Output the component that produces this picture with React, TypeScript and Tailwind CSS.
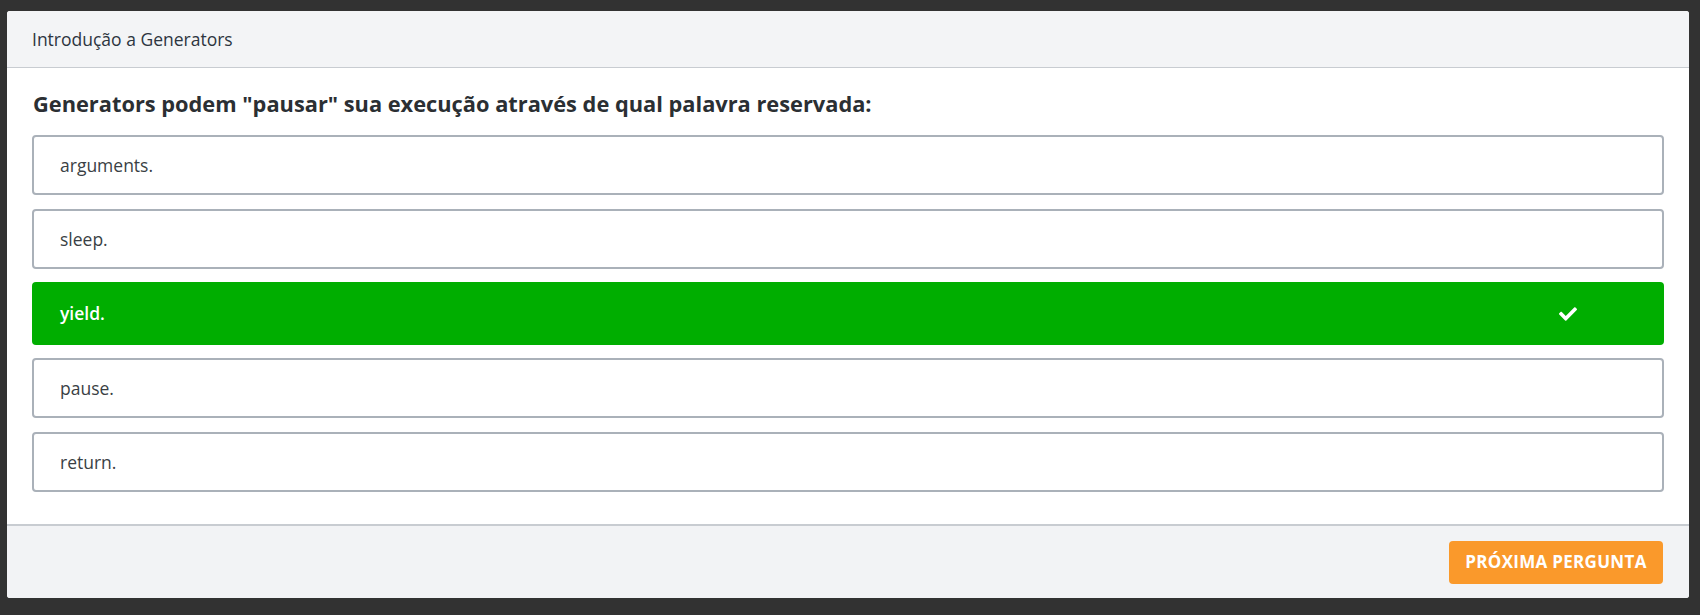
import React from 'react';

const options = [
  { label: 'arguments.', correct: false },
  { label: 'sleep.', correct: false },
  { label: 'yield.', correct: true },
  { label: 'pause.', correct: false },
  { label: 'return.', correct: false },
];

function CheckIcon() {
  return (
    <svg viewBox="0 0 512 512" className="w-[18px] h-[18px]" fill="currentColor">
      <path d="M173.898 439.404l-166.4-166.4c-9.997-9.997-9.997-26.206 0-36.204l36.203-36.204c9.997-9.998 26.207-9.998 36.204 0L192 312.69 432.095 72.596c9.997-9.997 26.207-9.997 36.204 0l36.203 36.204c9.997 9.997 9.997 26.206 0 36.204l-294.4 294.401c-9.998 9.997-26.207 9.997-36.204-.001z" />
    </svg>
  );
}

export default function App() {
  return (
    <div
      className="w-[1700px] h-[615px] bg-[#323232] pt-[11px] pl-[7px]"
      style={{ fontFamily: '"Open Sans", "Noto Sans", sans-serif' }}
    >
      <div className="w-[1682px] h-[587px] bg-white rounded-[3px] overflow-hidden flex flex-col">
        {/* Header */}
        <div className="h-[57px] bg-[#f3f4f6] border-b border-[#c8ccd1] flex items-center px-[25px] shrink-0">
          <span className="text-[17.5px] text-[#2d3540]">Introdução a Generators</span>
        </div>

        {/* Body */}
        <div className="flex-1 px-[25px] pt-[20px]">
          <h2 className="text-[21.8px] font-bold text-[#2b2f33] leading-[32px] pl-[1px] mb-[15px]">
            Generators podem "pausar" sua execução através de qual palavra reservada:
          </h2>
          <div className="flex flex-col gap-[14px]">
            {options.map((opt) =>
              opt.correct ? (
                <div
                  key={opt.label}
                  className="h-[63px] rounded-[4px] bg-[#00ae00] text-white flex items-center justify-between pl-[28px] pr-[87px] -my-[1px]"
                >
                  <span className="text-[17.5px] font-semibold">{opt.label}</span>
                  <CheckIcon />
                </div>
              ) : (
                <div
                  key={opt.label}
                  className="h-[60px] rounded-[4px] border-2 border-[#aab1b9] bg-white flex items-center pl-[26px]"
                >
                  <span className="text-[17.5px] text-[#3a3f44]">{opt.label}</span>
                </div>
              )
            )}
          </div>
        </div>

        {/* Footer */}
        <div className="h-[74px] bg-[#f2f3f5] border-t-2 border-[#c8ccd1] flex items-center justify-end px-[26px] shrink-0">
          <button className="h-[43px] w-[214px] rounded-[4px] bg-[#fa992b] text-white text-[17px] font-bold uppercase tracking-[0.3px]">
            Próxima pergunta
          </button>
        </div>
      </div>
    </div>
  );
}
